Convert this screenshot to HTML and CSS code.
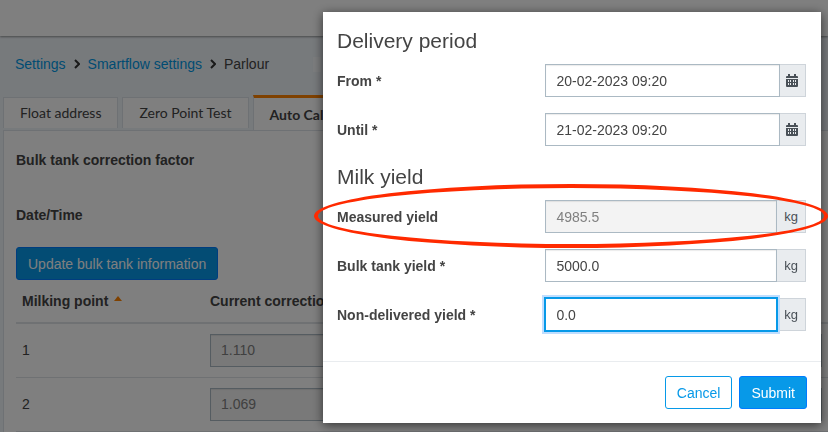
FILE: index.html
```html
<!DOCTYPE html>
<html lang="en">
<head>
    <meta charset="UTF-8">
    <meta name="viewport" content="width=device-width, initial-scale=1.0">
    <title>Smartflow settings - Parlour</title>
    <link rel="stylesheet" href="styles.css">
</head>
<body>
    <header class="topbar"></header>

    <nav class="breadcrumb" aria-label="Breadcrumb">
        <a href="#">Settings</a>
        <svg class="chevron" viewBox="0 0 6 10"><path d="M1 1l4 4-4 4"/></svg>
        <a href="#">Smartflow settings</a>
        <svg class="chevron" viewBox="0 0 6 10"><path d="M1 1l4 4-4 4"/></svg>
        <span>Parlour</span>
        <span class="blank"></span>
    </nav>

    <div class="tabs">
        <button class="tab">Float address</button>
        <button class="tab">Zero Point Test</button>
        <button class="tab active">Auto Calibration</button>
    </div>

    <main class="panel">
        <p class="info">Bulk tank correction factor</p>
        <p class="info">Date/Time</p>
        <button class="btn btn-primary">Update bulk tank information</button>

        <table class="points">
            <thead>
                <tr>
                    <th>Milking point <span class="sort"></span></th>
                    <th>Current correction</th>
                </tr>
            </thead>
            <tbody>
                <tr>
                    <td>1</td>
                    <td><input class="control" type="text" value="1.110" aria-label="Correction factor 1" disabled></td>
                </tr>
                <tr>
                    <td>2</td>
                    <td><input class="control" type="text" value="1.069" aria-label="Correction factor 2" disabled></td>
                </tr>
            </tbody>
        </table>
    </main>

    <!-- Modal -->
    <div class="overlay">
        <form class="modal" role="dialog" aria-label="Bulk tank information">
            <div class="modal-body">
                <h2>Delivery period</h2>
                <div class="row">
                    <label for="from">From *</label>
                    <div class="group">
                        <input class="control" id="from" type="text" value="20-02-2023 09:20">
                        <button class="addon" type="button" aria-label="Pick start date">
                            <svg class="calendar" viewBox="0 0 12 14"><path fill-rule="evenodd" d="M2 0h2v2h4V0h2v2h1q1 0 1 1v1H0V3q0-1 1-1h1zM0 5h12v7q0 1-1 1H1q-1 0-1-1zM2 6v2h1V6zM4 6v2h1V6zM7 6v2h1V6zM9 6v2h1V6zM2 9v2h1V9zM4 9v2h1V9zM7 9v2h1V9zM9 9v2h1V9z"/></svg>
                        </button>
                    </div>
                </div>
                <div class="row">
                    <label for="until">Until *</label>
                    <div class="group">
                        <input class="control" id="until" type="text" value="21-02-2023 09:20">
                        <button class="addon" type="button" aria-label="Pick end date">
                            <svg class="calendar" viewBox="0 0 12 14"><path fill-rule="evenodd" d="M2 0h2v2h4V0h2v2h1q1 0 1 1v1H0V3q0-1 1-1h1zM0 5h12v7q0 1-1 1H1q-1 0-1-1zM2 6v2h1V6zM4 6v2h1V6zM7 6v2h1V6zM9 6v2h1V6zM2 9v2h1V9zM4 9v2h1V9zM7 9v2h1V9zM9 9v2h1V9z"/></svg>
                        </button>
                    </div>
                </div>

                <h2>Milk yield</h2>
                <div class="row marked">
                    <label for="measured">Measured yield</label>
                    <div class="group">
                        <input class="control" id="measured" type="text" value="4985.5" disabled>
                        <span class="addon">kg</span>
                    </div>
                </div>
                <div class="row">
                    <label for="bulk">Bulk tank yield *</label>
                    <div class="group">
                        <input class="control" id="bulk" type="text" value="5000.0">
                        <span class="addon">kg</span>
                    </div>
                </div>
                <div class="row">
                    <label for="nondelivered">Non-delivered yield *</label>
                    <div class="group">
                        <input class="control focused" id="nondelivered" type="text" value="0.0">
                        <span class="addon">kg</span>
                    </div>
                </div>
            </div>
            <div class="modal-footer">
                <button class="btn btn-outline" type="button">Cancel</button>
                <button class="btn btn-primary" type="submit">Submit</button>
            </div>
        </form>
    </div>
</body>
</html>
```

FILE: styles.css
```css
* {
    box-sizing: border-box;
}

body {
    display: flex;
    flex-direction: column;
    margin: 0;
    min-height: 100vh;
    background: #eff4f9;
    color: #444444;
    font-family: "Liberation Sans", Arial, sans-serif;
    font-size: 14px;
    line-height: 20px;
}

input,
button {
    font: inherit;
}

.topbar {
    height: 36px;
    background: #ffffff;
    box-shadow: 0 1px 2px rgba(0, 0, 0, 0.4);
}

.breadcrumb {
    display: flex;
    align-items: center;
    gap: 8px;
    padding: 18px 15px 21px;
}

.breadcrumb a {
    color: #0099e6;
    text-decoration: none;
}

.chevron {
    width: 6px;
    height: 10px;
    fill: none;
    stroke: #333333;
    stroke-width: 2;
}

.blank {
    width: 8px;
    height: 15px;
    margin-left: 36px;
    background: #f8fafc;
}

/* Tabs */
.tabs {
    display: flex;
    align-items: flex-end;
    gap: 4px;
    padding-left: 3px;
}

.tab {
    height: 31px;
    margin-bottom: 2px;
    padding: 0 16px;
    border: 1px solid #dde2e8;
    border-bottom: 0;
    background: #ffffff;
    color: #444444;
    font-family: Lato, sans-serif;
    font-size: 14px;
}

.tab.active {
    height: 36px;
    margin-bottom: -1px;
    border-top: 3px solid #ff8200;
    font-weight: bold;
}

.panel {
    flex: 1;
    margin-left: 3px;
    padding: 19px 0 0 12px;
    border: 1px solid #dde2e8;
    border-width: 1px 0 0 1px;
    background: #ffffff;
}

.info {
    margin: 0 0 35px;
    font-weight: bold;
}

.info:last-of-type {
    margin-bottom: 22px;
}

.btn {
    display: block;
    height: 33px;
    padding: 0 11px;
    border: 1px solid #007bff;
    border-radius: 3px;
    cursor: pointer;
}

.btn-primary {
    background: #0799e8;
    color: #ffffff;
}

.btn-outline {
    border-color: #0799e8;
    background: #ffffff;
    color: #0799e8;
}

.points {
    width: 100%;
    border-collapse: collapse;
    table-layout: fixed;
}

.points th,
.points td {
    padding: 0 6px;
    text-align: left;
}

.points th {
    height: 43px;
    border-bottom: 2px solid #dee2e6;
}

.points th:first-child {
    width: 188px;
}

.points td {
    height: 54px;
    border-bottom: 1px solid #dee2e6;
}

.sort {
    display: inline-block;
    margin-left: 2px;
    border: 4px solid transparent;
    border-top: 0;
    border-bottom: 5px solid #ff8200;
    vertical-align: 5px;
}

.control {
    width: 100%;
    min-width: 0;
    height: 33px;
    padding: 0 10px;
    border: 1px solid #abb9c3;
    border-radius: 0;
    background: #ffffff;
    color: #444444;
    box-shadow: inset 0 1px 1px rgba(0, 0, 0, 0.08);
}

.control:disabled {
    background: #f3f3f3;
    color: #808080;
}

.control.focused {
    position: relative;
    border-color: #0799e8;
    outline: 1px solid #0799e8;
    box-shadow: 0 0 0 3px #bfdeff;
}

/* Modal */
.overlay {
    position: fixed;
    inset: 0;
    display: flex;
    align-items: flex-start;
    justify-content: flex-end;
    padding: 12px 7px;
    background: rgba(0, 0, 0, 0.5);
}

.modal {
    width: 100%;
    max-width: 498px;
    background: #ffffff;
    box-shadow: 0 2px 10px rgba(0, 0, 0, 0.6);
}

.modal-body {
    padding: 14px 15px 14px 14px;
}

.modal h2 {
    margin: 0 0 8px;
    font-size: 21px;
    font-weight: normal;
    line-height: 30px;
}

.row {
    display: flex;
    align-items: center;
    margin-bottom: 16px;
}

.row label {
    flex: 4;
    font-weight: bold;
}

.group {
    display: flex;
    flex: 5;
}

.addon {
    display: flex;
    align-items: center;
    justify-content: center;
    height: 33px;
    padding: 0 7px;
    border: 1px solid #ced4da;
    border-left: 0;
    background: #e9ecef;
    color: #495057;
    font-size: 13px;
}

button.addon {
    padding: 0 7px 0 6px;
}

.calendar {
    width: 12px;
    height: 14px;
    fill: #495057;
}

/* Red ring around the measured value */
.marked {
    position: relative;
}

.marked::after {
    content: "";
    position: absolute;
    inset: -16px -22px -15px -23px;
    border: 4px solid #ff2a00;
    border-radius: 50%;
    pointer-events: none;
}

.modal-footer {
    display: flex;
    justify-content: flex-end;
    gap: 7px;
    padding: 14px;
    border-top: 1px solid #e9ecef;
}
```
